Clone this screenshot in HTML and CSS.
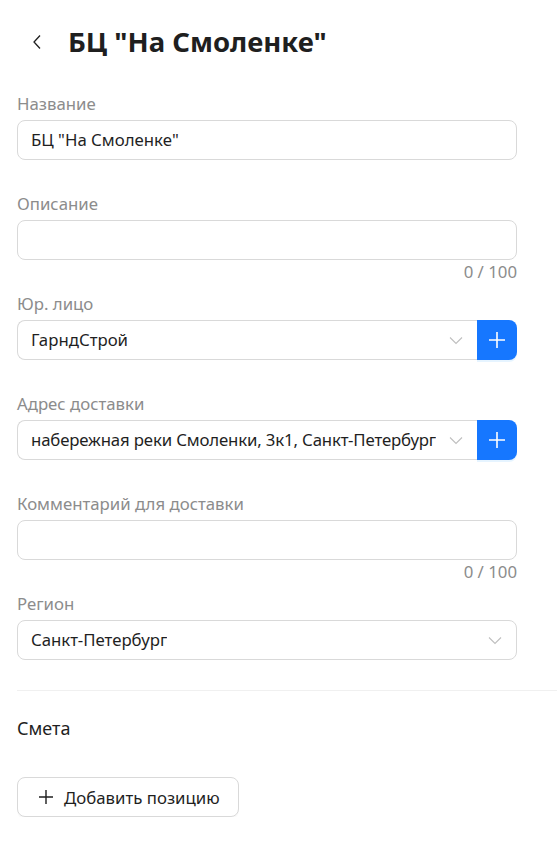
FILE: index.html
```html
<!DOCTYPE html>
<html lang="ru">
<head>
<meta charset="utf-8">
<link rel="stylesheet" href="styles.css">
</head>
<body>
<div class="page">
  <header class="header">
    <span class="back">
      <svg width="10" height="16" viewBox="0 0 10 16"><path d="M8 1.5 L2 8 L8 14.5" fill="none" stroke="#1f1f1f" stroke-width="1.3"/></svg>
    </span>
    <h1 class="title">БЦ "На Смоленке"</h1>
  </header>

  <form class="form">
    <div class="item">
      <div class="label">Название</div>
      <div class="input">БЦ "На Смоленке"</div>
    </div>
    <div class="item item-count">
      <div class="label">Описание</div>
      <div class="input"></div>
      <div class="count">0 / 100</div>
    </div>
    <div class="item">
      <div class="label">Юр. лицо</div>
      <div class="group">
        <div class="select joined"><span class="value">ГарндСтрой</span><span class="arrow"><svg width="14" height="9" viewBox="0 0 14 9"><path d="M1 1.5 L7 7.5 L13 1.5" fill="none" stroke="#bfbfbf" stroke-width="1.1"/></svg></span></div>
        <span class="add"><svg width="18" height="18" viewBox="0 0 18 18"><path d="M9 1 V17 M1 9 H17" stroke="#fff" stroke-width="1.6"/></svg></span>
      </div>
    </div>
    <div class="item">
      <div class="label">Адрес доставки</div>
      <div class="group">
        <div class="select joined"><span class="value tight">набережная реки Смоленки, 3к1, Санкт-Петербург</span><span class="arrow"><svg width="14" height="9" viewBox="0 0 14 9"><path d="M1 1.5 L7 7.5 L13 1.5" fill="none" stroke="#bfbfbf" stroke-width="1.1"/></svg></span></div>
        <span class="add"><svg width="18" height="18" viewBox="0 0 18 18"><path d="M9 1 V17 M1 9 H17" stroke="#fff" stroke-width="1.6"/></svg></span>
      </div>
    </div>
    <div class="item item-count">
      <div class="label">Комментарий для доставки</div>
      <div class="input"></div>
      <div class="count">0 / 100</div>
    </div>
    <div class="item last">
      <div class="label">Регион</div>
      <div class="select"><span class="value">Санкт-Петербург</span><span class="arrow"><svg width="14" height="9" viewBox="0 0 14 9"><path d="M1 1.5 L7 7.5 L13 1.5" fill="none" stroke="#bfbfbf" stroke-width="1.1"/></svg></span></div>
    </div>
  </form>

  <hr class="divider">

  <h2 class="section">Смета</h2>

  <button class="btn" type="button">
    <svg width="14" height="14" viewBox="0 0 14 14"><path d="M7 0 V14 M0 7 H14" stroke="#1f1f1f" stroke-width="1.4"/></svg>
    <span>Добавить позицию</span>
  </button>
</div>
</body>
</html>
```

FILE: styles.css
```css
* { box-sizing: border-box; }
html, body { margin: 0; padding: 0; background: #fff; }
body {
  font-family: "Noto Sans", "Open Sans", sans-serif;
  font-size: 16.8px;
  color: #1f1f1f;
}
.page { padding-left: 17px; }

.header {
  height: 84px;
  display: flex;
  align-items: center;
}
.back {
  width: 51px;
  display: flex;
  align-items: center;
  padding-left: 15px;
}
.back svg { display: block; }
.title {
  margin: 0;
  font-size: 27.5px;
  font-weight: 700;
  line-height: 1;
  color: #1f1f1f;
}

.form { width: 500px; padding-top: 8px; }
.item { margin-bottom: 32px; }
.item-count { margin-bottom: 8px; }
.item.last { margin-bottom: 30px; }
.label {
  color: #8c8c8c;
  line-height: 24px;
  margin-bottom: 4px;
}
.input, .select {
  height: 40px;
  border: 1px solid #d9d9d9;
  border-radius: 8px;
  padding: 0 13px;
  display: flex;
  align-items: center;
  line-height: 24px;
  background: #fff;
}
.count {
  text-align: right;
  color: #8c8c8c;
  line-height: 24px;
}
.group { display: flex; }
.select { justify-content: space-between; }
.select.joined {
  flex: 1;
  min-width: 0;
  border-radius: 8px 0 0 8px;
  border-right: none;
}
.value {
  white-space: nowrap;
  overflow: hidden;
  min-width: 0;
}
.value.tight { letter-spacing: -0.15px; }
.arrow {
  flex: none;
  display: flex;
  margin-left: 6px;
  margin-right: 1px;
}
.add {
  flex: none;
  width: 40px;
  height: 40px;
  background: #1677ff;
  border-radius: 0 8px 8px 0;
  display: flex;
  align-items: center;
  justify-content: center;
  box-shadow: 0 2px 0 rgba(5, 145, 255, 0.1);
}

.divider {
  margin: 0;
  border: none;
  border-top: 1px solid #f0f0f0;
}
.section {
  margin: 0;
  font-size: 18px;
  font-weight: 400;
  line-height: 24px;
  padding-top: 25px;
  height: 86px;
}
.btn {
  font-family: inherit;
  font-size: 16.8px;
  color: #1f1f1f;
  height: 40px;
  border: 1px solid #d9d9d9;
  border-radius: 8px;
  background: #fff;
  padding: 0 18px 0 21px;
  display: flex;
  align-items: center;
  gap: 11px;
  box-shadow: 0 2px 0 rgba(0, 0, 0, 0.02);
}
```
